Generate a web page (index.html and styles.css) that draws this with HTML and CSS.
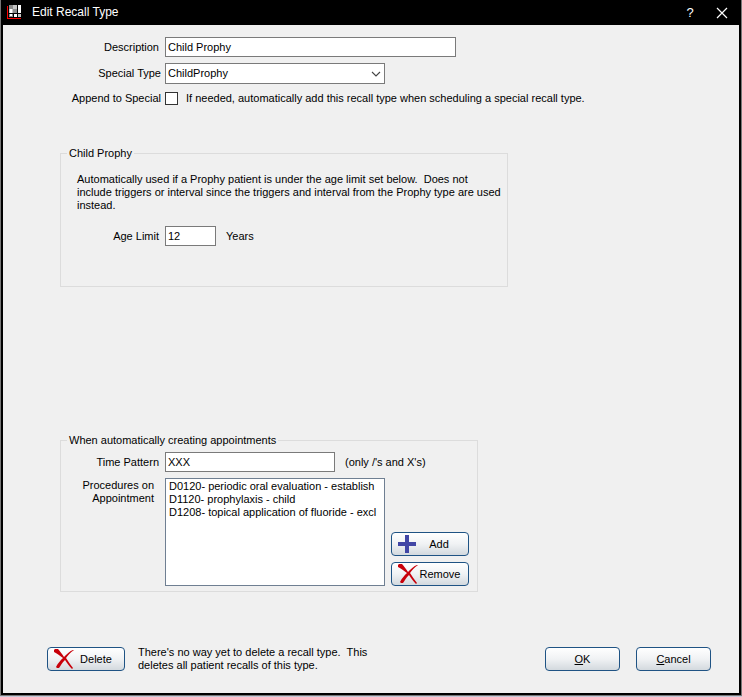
FILE: index.html
```html
<!DOCTYPE html>
<html lang="en">
<head>
<meta charset="utf-8">
<title>Edit Recall Type</title>
<link rel="stylesheet" href="styles.css">
</head>
<body>
<div class="window">
  <header class="titlebar">
    <svg class="app-icon" width="15" height="15" viewBox="0 0 15 15" shape-rendering="crispEdges" aria-hidden="true">
      <path fill="#f00" d="M0 1h1v13H0zM0 13h14v1H0z"/>
      <path fill="#8c8c8c" d="M2 0h4v4H2zM6 4h4v4H6zM2 9h4v3H2z"/>
      <path fill="#c4c4c4" d="M6 0h4v4H6zM2 4h4v4H2zM11 9h3v3h-3z"/>
      <path fill="#fff" d="M3 4h2v4H3zM11 0h3v4h-3zM11 4h3v4h-3zM7 9h3v3H7zM3 9h2v2H3z"/>
    </svg>
    <h1 class="title">Edit Recall Type</h1>
    <button class="caption-button" type="button" aria-label="Help">?</button>
    <button class="caption-button" type="button" aria-label="Close">
      <svg width="12" height="12" viewBox="0 0 12 12" aria-hidden="true"><path d="M1 1l10 10M11 1L1 11" stroke="#fff" stroke-width="1.2" fill="none"/></svg>
    </button>
  </header>
  <form class="content">
    <div class="fields">
      <div class="row">
        <label class="label" for="description">Description</label>
        <input class="textbox wide" id="description" type="text" value="Child Prophy">
      </div>
      <div class="row">
        <label class="label near" for="special-type">Special Type</label>
        <span class="combo">
          <select class="combo-select" id="special-type"><option>ChildProphy</option></select>
          <svg class="chevron" width="10" height="6" viewBox="0 0 10 6" aria-hidden="true"><path d="M1 1l4 4 4-4" stroke="#444" stroke-width="1.1" fill="none"/></svg>
        </span>
      </div>
      <div class="row">
        <label class="label near" for="append">Append to Special</label>
        <input class="checkbox" id="append" type="checkbox">
        <label class="check-text" for="append">If needed, automatically add this recall type when scheduling a special recall type.</label>
      </div>
    </div>

    <fieldset class="group prophy">
      <legend>Child Prophy</legend>
      <p class="note">Automatically used if a Prophy patient is under the age limit set below.&nbsp; Does not<br>include triggers or interval since the triggers and interval from the Prophy type are used<br>instead.</p>
      <div class="row">
        <label class="label" for="age">Age Limit</label>
        <input class="textbox age" id="age" type="text" value="12">
        <span class="unit">Years</span>
      </div>
    </fieldset>

    <fieldset class="group appointments">
      <legend>When automatically creating appointments</legend>
      <div class="row">
        <label class="label" for="pattern">Time Pattern</label>
        <input class="textbox pattern" id="pattern" type="text" value="XXX">
        <span class="unit">(only /'s and X's)</span>
      </div>
      <div class="row stretch">
        <label class="label far" for="procedures">Procedures on<br>Appointment</label>
        <select class="listbox" id="procedures" multiple>
          <option>D0120- periodic oral evaluation - establish</option>
          <option>D1120- prophylaxis - child</option>
          <option>D1208- topical application of fluoride - excl</option>
        </select>
        <div class="list-buttons">
          <button class="button" type="button">
            <svg class="icon" width="18" height="18" viewBox="0 0 18 18" aria-hidden="true"><path fill="#4146a5" d="M7 0h4v7h7v4h-7v7H7v-7H0V7h7z"/></svg>
            <span class="caption">Add</span>
          </button>
          <button class="button" type="button">
            <svg class="icon" width="20" height="20" viewBox="0 0 20 20" aria-hidden="true"><path fill="#c8000a" d="M0 1l1-1h3C6 2 8 5 10 8c3-3 6-6 9-7h1c-4 3-6 5-8 8 2 3 4 6 7 10l-1 1c-3-3-5-6-7-9-3 3-4 5-6 8H3l-1-1c2-4 4-6 7-9C6 7 4 5 0 3z"/></svg>
            <span class="caption">Remove</span>
          </button>
        </div>
      </div>
    </fieldset>

    <footer class="actions">
      <button class="button" type="button">
        <svg class="icon" width="20" height="20" viewBox="0 0 20 20" aria-hidden="true"><path fill="#c8000a" d="M0 1l1-1h3C6 2 8 5 10 8c3-3 6-6 9-7h1c-4 3-6 5-8 8 2 3 4 6 7 10l-1 1c-3-3-5-6-7-9-3 3-4 5-6 8H3l-1-1c2-4 4-6 7-9C6 7 4 5 0 3z"/></svg>
        <span class="caption">Delete</span>
      </button>
      <p class="delete-note">There's no way yet to delete a recall type.&nbsp; This<br>deletes all patient recalls of this type.</p>
      <div class="confirm">
        <button class="button plain" type="submit"><span><u>O</u>K</span></button>
        <button class="button plain" type="button"><span><u>C</u>ancel</span></button>
      </div>
    </footer>
  </form>
</div>
</body>
</html>
```
FILE: styles.css
```css
* {
  box-sizing: border-box;
}

body {
  margin: 0;
  min-height: 100vh;
  display: flex;
  flex-direction: column;
  padding-bottom: 1px;
  background: #c5c8d8;
  color: #000;
  font: 11px/13px "Liberation Sans", Arial, sans-serif;
}

input,
select,
button {
  font: inherit;
  color: inherit;
}

p {
  margin: 0;
}

.window {
  flex: 1;
  display: flex;
  flex-direction: column;
  border: 1px solid #777;
  border-top: 0;
  background: #000;
  padding: 0 2px 2px;
}

.titlebar {
  display: flex;
  align-items: center;
  height: 25px;
  padding: 0 5px 0 4px;
  color: #fff;
}

.title {
  flex: 1;
  margin: 0 0 0 10px;
  font-size: 12px;
  line-height: 13px;
  font-weight: normal;
}

.caption-button {
  display: flex;
  align-items: center;
  justify-content: center;
  width: 24px;
  height: 24px;
  margin-left: 8px;
  padding: 0;
  border: 0;
  background: none;
  font-size: 13px;
}

.content {
  flex: 1;
  display: flex;
  flex-direction: column;
  padding: 12px 28px 21px 44px;
  background: #f0f0f0;
}

.fields {
  display: flex;
  flex-direction: column;
  gap: 6px;
}

.fields .row {
  padding-left: 13px;
}

.row {
  display: flex;
  align-items: center;
}

.row.stretch {
  align-items: stretch;
}

.label {
  width: 105px;
  padding-right: 6px;
  text-align: right;
  white-space: nowrap;
}

.near {
  padding-right: 4px;
}

.far {
  padding-top: 1px;
  padding-right: 11px;
}

.textbox {
  height: 20px;
  padding: 0 2px;
  border: 1px solid #7a7a7a;
  border-radius: 0;
  background: #fff;
}

.wide {
  width: 291px;
}

.age {
  width: 51px;
}

.pattern {
  width: 170px;
}

.combo {
  position: relative;
  display: flex;
  width: 220px;
}

.combo-select {
  appearance: none;
  width: 100%;
  height: 21px;
  padding: 0 20px 0 2px;
  border: 1px solid #7a7a7a;
  border-radius: 0;
  background: #fff;
}

.chevron {
  position: absolute;
  right: 4px;
  top: 8px;
  pointer-events: none;
}

.checkbox {
  appearance: none;
  width: 13px;
  height: 13px;
  margin: 2px 1px 2px 0;
  border: 1px solid #333;
  background: #fff;
}

.checkbox:checked {
  background: #333;
  box-shadow: inset 0 0 0 2px #fff;
}

.check-text {
  padding-left: 7px;
}

.group {
  min-width: 0;
  margin: 0 0 0 13px;
  border: 1px solid #dcdcdc;
}

.group legend {
  margin: 0 0 0 6px;
  padding: 0 2px;
}

.prophy {
  width: 448px;
  margin-top: 40px;
  padding: 13px 4px 40px 0;
}

.prophy .row,
.appointments .row {
  margin-left: -1px;
}

.note {
  padding-left: 16px;
  margin-bottom: 14px;
}

.unit {
  padding-left: 10px;
}

.appointments {
  width: 418px;
  margin-top: 147px;
  padding: 5px 8px 5px 0;
}

.appointments .stretch {
  margin-top: 6px;
}

.listbox {
  width: 220px;
  height: 108px;
  padding: 1px;
  border: 1px solid #6f7f92;
  border-radius: 0;
  background: #fff;
  overflow: hidden;
}

.listbox option {
  min-height: 13px;
  padding: 0 2px;
  line-height: 13px;
}

.list-buttons {
  display: flex;
  flex-direction: column;
  justify-content: flex-end;
  gap: 6px;
  margin-left: 6px;
}

.button {
  display: flex;
  align-items: center;
  width: 78px;
  height: 24px;
  padding: 0 6px;
  border: 1px solid #1f5384;
  border-radius: 4px;
  background: linear-gradient(#fff, #f0f2f4 50%, #d3d9de);
}

.icon {
  flex: none;
}

.caption {
  flex: 1;
  text-align: center;
}

.plain {
  width: 75px;
  justify-content: center;
}

.actions {
  display: flex;
  align-items: center;
  margin-top: auto;
}

.delete-note {
  width: 236px;
  margin-left: 13px;
}

.confirm {
  display: flex;
  gap: 16px;
  margin-left: auto;
}
```
